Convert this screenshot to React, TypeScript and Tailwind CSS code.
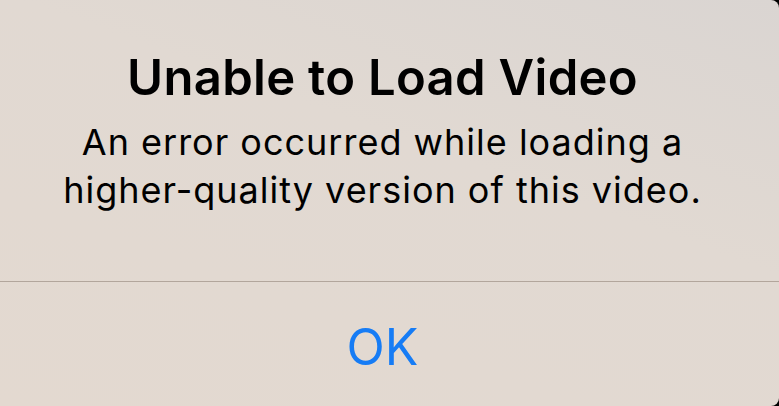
import React from "react";

export default function App() {
  return (
    <div className="w-[779px] h-[406px] bg-black overflow-hidden">
      <div
        className="w-full h-full flex flex-col rounded-tr-[8px] rounded-br-[8px] bg-[linear-gradient(200deg,#dad5d2_0%,#e1d9d2_40%,#e3d9d0_100%)]"
        style={{ fontFamily: "Inter, 'Noto Sans', sans-serif" }}
      >
        <div className="h-[282px] flex flex-col items-center pt-[50px] pr-[14px] border-b border-[#b2a69c]">
          <h1 className="text-[49px] leading-[56px] font-semibold text-black tracking-[0.3px]">
            Unable to Load Video
          </h1>
          <p className="mt-[12px] text-[36px] leading-[48px] text-black text-center tracking-[1px]">
            An error occurred while loading a
            <br />
            higher-quality version of this video.
          </p>
        </div>
        <div className="flex-1 flex items-center justify-center pr-[14px] pt-[5px]">
          <span className="text-[50px] leading-none text-[#167cf5]">OK</span>
        </div>
      </div>
    </div>
  );
}
